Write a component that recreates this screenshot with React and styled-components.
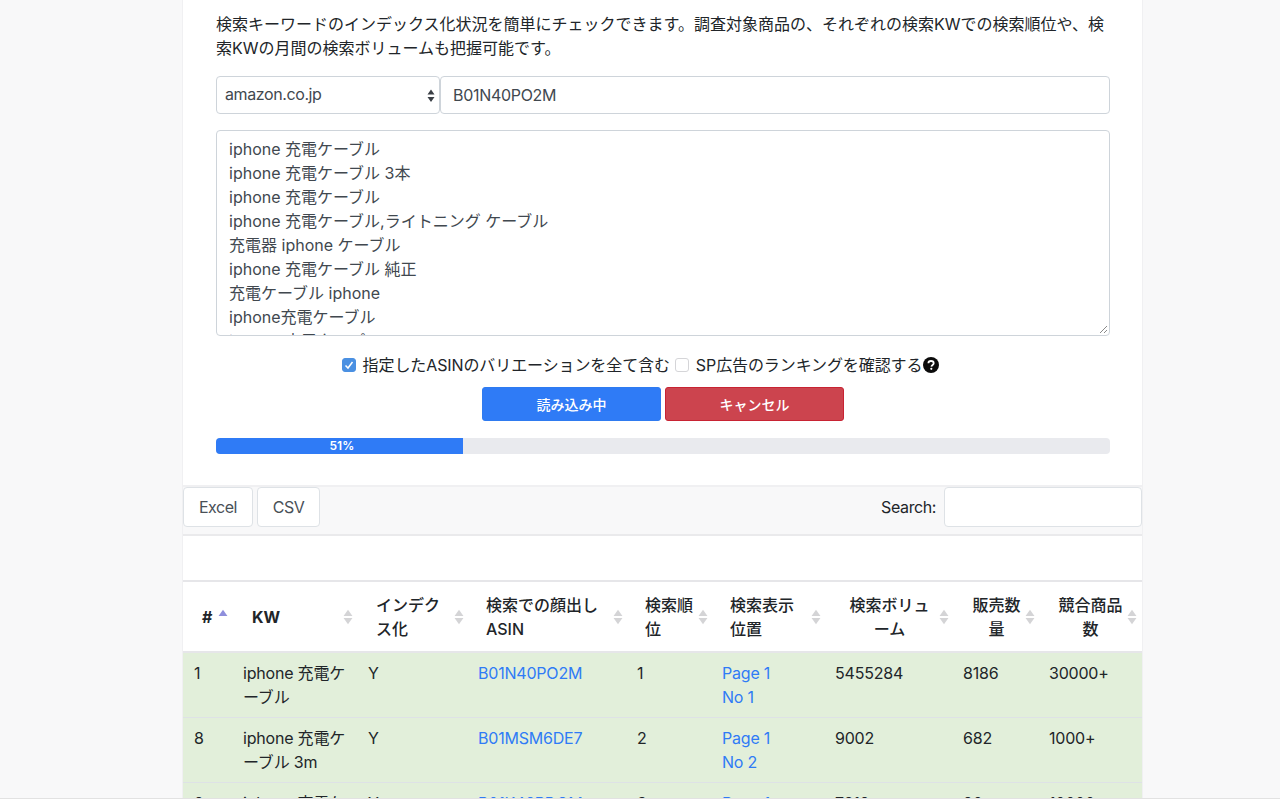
import React from "react";
import styled, { createGlobalStyle } from "styled-components";

const GlobalStyle = createGlobalStyle`
  html, body {
    margin: 0;
    padding: 0;
    height: 800px;
    overflow: hidden;
    background: #fff;
  }
  * {
    box-sizing: border-box;
  }
  body {
    font-family: Inter, "Liberation Sans", "Noto Sans CJK JP", sans-serif;
    font-size: 16px;
    line-height: 24px;
    color: #212529;
  }
`;

const Viewport = styled.div`
  height: 799px;
  overflow: hidden;
  background: #f8f8f9;
  border-bottom: 1px solid #e2e2e2;
`;

const Page = styled.div`
  width: 959px;
  margin-left: 183px;
  background: #fff;
  box-shadow: -1px 0 0 #f0f0f2, 1px 0 0 #f0f0f2;
`;

const Panel = styled.section`
  padding: 12px 32px 31px 33px;
  border-bottom: 2px solid #f0f0f2;
`;

const Intro = styled.p`
  margin: 0 0 16px;
  font-size: 16px;
  line-height: 24px;
`;

const InputRow = styled.div`
  display: flex;
  margin-bottom: 16px;
`;

const SelectBox = styled.div`
  position: relative;
  width: 224px;
  height: 38px;
  padding: 5px 8px;
  border: 1px solid #ced4da;
  border-radius: 4px;
  color: #41484f;
  letter-spacing: -0.4px;
  background: #fff;
`;

const SelectArrows = styled.svg`
  position: absolute;
  right: 4px;
  top: 12px;
`;

const TextInput = styled.div`
  flex: 1;
  height: 38px;
  padding: 6px 12px;
  border: 1px solid #ced4da;
  border-radius: 4px;
  color: #41484f;
  letter-spacing: -0.3px;
`;

const KeywordArea = styled.div`
  position: relative;
  height: 206px;
  padding: 6px 12px;
  margin-bottom: 17px;
  overflow: hidden;
  border: 1px solid #ced4da;
  border-radius: 4px;
  color: #41484f;
  white-space: pre;
`;

const ResizeGrip = styled.svg`
  position: absolute;
  right: 1px;
  bottom: 1px;
`;

const OptionRow = styled.div`
  display: flex;
  justify-content: center;
  align-items: center;
  height: 24px;
  margin-bottom: 10px;
  padding-right: 45px;
`;

const Check = styled.span`
  display: inline-flex;
  flex: none;
  align-items: center;
  justify-content: center;
  width: 14px;
  height: 14px;
  margin-right: 7px;
  border-radius: 3px;
  border: 1px solid ${(p) => (p.$on ? "#4a90e2" : "#d5d5d8")};
  background: ${(p) => (p.$on ? "#4a90e2" : "#fff")};
`;

const OptionLabel = styled.span`
  margin-right: 5px;
  letter-spacing: -0.1px;
`;

const HelpIcon = styled.svg`
  flex: none;
  margin-left: -4px;
`;

const ButtonRow = styled.div`
  display: flex;
  justify-content: center;
  gap: 4px;
  margin-bottom: 17px;
`;

const ActionButton = styled.button`
  width: 179px;
  height: 34px;
  padding: 0;
  border: 1px solid ${(p) => (p.$danger ? "#c82333" : "#2f7bf0")};
  border-radius: 3px;
  background: ${(p) => (p.$danger ? "#cc444e" : "#2f7bf6")};
  color: #fff;
  font: 500 14px/21px Inter, "Liberation Sans", "Noto Sans CJK JP", sans-serif;
`;

const Progress = styled.div`
  height: 16px;
  overflow: hidden;
  border-radius: 4px;
  background: #e9eaee;
`;

const ProgressBar = styled.div`
  height: 100%;
  padding-left: 5px;
  background: #2f7bf6;
  color: #fff;
  font-size: 12px;
  font-weight: 600;
  line-height: 16px;
  text-align: center;
`;

const Toolbar = styled.div`
  display: flex;
  align-items: flex-start;
  gap: 4px;
  height: 49px;
  background: #f8f8f9;
  border-bottom: 2px solid #eaeaec;
`;

const ToolButton = styled.button`
  height: 40px;
  padding: 0 15px;
  border: 1px solid #dee2e6;
  border-radius: 4px;
  background: #fff;
  color: #495057;
  letter-spacing: -0.5px;
  font: 400 16px/24px Inter, "Liberation Sans", sans-serif;
`;

const SearchLabel = styled.label`
  margin-left: auto;
  margin-right: 4px;
  line-height: 40px;
  letter-spacing: -0.4px;
`;

const SearchInput = styled.div`
  width: 198px;
  height: 40px;
  border: 1px solid #dee2e6;
  border-radius: 4px;
  background: #fff;
`;

const Spacer = styled.div`
  height: 46px;
  background: #fff;
  border-bottom: 2px solid #e6e6e9;
`;

const Table = styled.table`
  width: 959px;
  table-layout: fixed;
  border-collapse: collapse;
`;

const HeadCell = styled.th`
  position: relative;
  height: 70px;
  padding: 0 16px 0 ${(p) => p.$pad || 19}px;
  font-size: 16px;
  line-height: 24px;
  font-weight: ${(p) => (p.$bold ? 700 : 500)};
  text-align: ${(p) => (p.$center ? "center" : "left")};
  color: #212529;
  border-bottom: 2px solid #e6e6e9;
`;

const SortIcon = styled.svg`
  position: absolute;
  right: ${(p) => p.$right || 3}px;
  top: 27px;
`;

const Row = styled.tr`
  background: #e2efda;
  border-bottom: 1px solid #dee2e6;
`;

const Cell = styled.td`
  height: 65px;
  padding: 8px 10px 8px 11px;
  vertical-align: top;
  font-size: 16px;
  line-height: 24px;
  letter-spacing: -0.2px;
  color: #212529;
`;

const Link = styled.a`
  color: #2f7bf6;
  text-decoration: none;
`;

const Sort = ({ active, right }) => (
  <SortIcon $right={right} width="10" height="16" viewBox="0 0 9 14">
    <path d="M4.5 0.5 L8.5 6 L0.5 6 Z" fill={active ? "#8f8fdc" : "#d4d4d6"} />
    {!active && <path d="M0.5 8 L8.5 8 L4.5 13.5 Z" fill="#d4d4d6" />}
  </SortIcon>
);

const keywords = [
  "iphone 充電ケーブル",
  "iphone 充電ケーブル 3本",
  "iphone 充電ケーブル",
  "iphone 充電ケーブル,ライトニング ケーブル",
  "充電器 iphone ケーブル",
  "iphone 充電ケーブル 純正",
  "充電ケーブル iphone",
  "iphone充電ケーブル",
  "iphone 充電タイプ",
];

const columns = [
  { key: "#", width: 49, bold: true, right: 4, active: true },
  { key: "KW", width: 125, bold: true, pad: 20, right: 4 },
  { key: "インデクス化", width: 110 },
  { key: "検索での顔出しASIN", label: ["検索での顔出し", "ASIN"], width: 159 },
  { key: "検索順位", width: 85 },
  { key: "検索表示位置", width: 113 },
  { key: "検索ボリューム", width: 128, center: true },
  { key: "販売数量", width: 86, center: true },
  { key: "競合商品数", width: 104, center: true, pad: 17, right: 5 },
];

const rows = [
  { no: 1, kw: "iphone 充電ケーブル", asin: "B01N40PO2M", rank: 1, page: "Page 1", pos: "No 1", vol: 5455284, sold: 8186, comp: "30000+" },
  { no: 8, kw: "iphone 充電ケーブル 3m", asin: "B01MSM6DE7", rank: 2, page: "Page 1", pos: "No 2", vol: 9002, sold: 682, comp: "1000+" },
  { no: 9, kw: "iphone 充電ケーブル", asin: "B01K48PDQM", rank: 3, page: "Page 1", pos: "No 3", vol: 7819, sold: 90, comp: "10000+" },
];

const App = () => (
  <Viewport>
    <GlobalStyle />
    <Page>
      <Panel>
        <Intro>
          検索キーワードのインデックス化状況を簡単にチェックできます。調査対象商品の、それぞれの検索KWでの検索順位や、検索KWの月間の検索ボリュームも把握可能です。
        </Intro>
        <InputRow>
          <SelectBox>
            amazon.co.jp
            <SelectArrows width="8" height="14" viewBox="0 0 8 14">
              <path d="M4 0.5 L7.5 5.5 L0.5 5.5 Z M0.5 8 L7.5 8 L4 13 Z" fill="#3a3f45" />
            </SelectArrows>
          </SelectBox>
          <TextInput>B01N40PO2M</TextInput>
        </InputRow>
        <KeywordArea>
          {keywords.join("\n")}
          <ResizeGrip width="10" height="10" viewBox="0 0 10 10">
            <path d="M9 2 L2 9 M9 6 L6 9" stroke="#8a8a8a" strokeWidth="1" />
          </ResizeGrip>
        </KeywordArea>
        <OptionRow>
          <Check $on>
            <svg width="10" height="10" viewBox="0 0 10 10">
              <path d="M1.5 5.5 L4 8 L8.5 2" stroke="#fff" strokeWidth="1.5" fill="none" />
            </svg>
          </Check>
          <OptionLabel>指定したASINのバリエーションを全て含む</OptionLabel>
          <Check />
          <OptionLabel>SP広告のランキングを確認する</OptionLabel>
          <HelpIcon width="16" height="16" viewBox="0 0 16 16">
            <circle cx="8" cy="8" r="8" fill="#0b0b0b" />
            <path d="M5.4 6.3 C5.4 4.7 6.6 4 8 4 C9.5 4 10.7 4.8 10.7 6.2 C10.7 7.9 8.5 7.9 8.4 9.6" stroke="#fff" strokeWidth="1.8" fill="none" />
            <circle cx="8.3" cy="11.8" r="1.1" fill="#fff" />
          </HelpIcon>
        </OptionRow>
        <ButtonRow>
          <ActionButton>読み込み中</ActionButton>
          <ActionButton $danger>キャンセル</ActionButton>
        </ButtonRow>
        <Progress>
          <ProgressBar style={{ width: "27.6%" }}>51%</ProgressBar>
        </Progress>
      </Panel>
      <Toolbar>
        <ToolButton>Excel</ToolButton>
        <ToolButton>CSV</ToolButton>
        <SearchLabel>Search:</SearchLabel>
        <SearchInput />
      </Toolbar>
      <Spacer />
      <Table>
        <colgroup>
          {columns.map((c) => (
            <col key={c.key} style={{ width: c.width }} />
          ))}
        </colgroup>
        <thead>
          <tr>
            {columns.map((c) => (
              <HeadCell key={c.key} $bold={c.bold} $pad={c.pad} $center={c.center}>
                {c.label ? c.label.map((l) => <div key={l}>{l}</div>) : c.key}
                <Sort active={c.active} right={c.right} />
              </HeadCell>
            ))}
          </tr>
        </thead>
        <tbody>
          {rows.map((r) => (
            <Row key={r.no}>
              <Cell>{r.no}</Cell>
              <Cell>{r.kw}</Cell>
              <Cell>Y</Cell>
              <Cell>
                <Link>{r.asin}</Link>
              </Cell>
              <Cell>{r.rank}</Cell>
              <Cell>
                <Link>
                  {r.page}
                  <br />
                  {r.pos}
                </Link>
              </Cell>
              <Cell>{r.vol}</Cell>
              <Cell>{r.sold}</Cell>
              <Cell>{r.comp}</Cell>
            </Row>
          ))}
        </tbody>
      </Table>
    </Page>
  </Viewport>
);

export default App;
